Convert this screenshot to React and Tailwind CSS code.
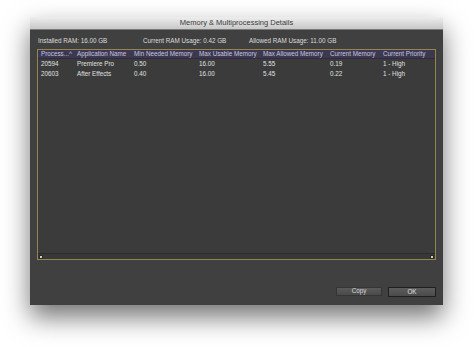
import { useState } from "react";

const rows = [
  { pid: "20594", name: "Premiere Pro", min: "0.50", usable: "16.00", allowed: "5.55", cur: "0.19", prio: "1 - High" },
  { pid: "20603", name: "After Effects", min: "0.40", usable: "16.00", allowed: "5.45", cur: "0.22", prio: "1 - High" },
];

function App() {
  const [sel] = useState(null);
  return (
    <div className="w-[474px] h-[347px] bg-white overflow-hidden" style={{ fontFamily: '"Liberation Sans", Arial, sans-serif' }}>
      <div className="pt-[17px] pl-[30px]">
        <div className="w-[413px] h-[288px] flex flex-col shadow-[0_12px_24px_rgba(0,0,0,0.55)]">
          <div className="h-[13px] bg-gradient-to-b from-[#eeeeee] to-[#c8c8c8] border-b border-[#7a7a7a] flex items-center justify-center text-[7.5px] text-[#3a3a3a]">
            Memory &amp; Multiprocessing Details
          </div>
          <div className="flex-1 bg-[#404040] flex flex-col px-[7px]">
            <div className="h-[19px] pt-[8px] flex text-[6.3px] text-[#dcdcdc] leading-none">
              <span className="w-[106px] pl-[1px]">Installed RAM: 16.00 GB</span>
              <span className="w-[106px]">Current RAM Usage: 0.42 GB</span>
              <span>Allowed RAM Usage: 11.00 GB</span>
            </div>
            <div className="h-[211px] border border-[#958450] bg-[#3b3b3b] flex flex-col">
              <div className="h-[9px] bg-[#3c3850] flex items-center text-[6.3px] text-[#c9c6e0] leading-none border-b border-[#2e2c3c]">
                <span className="w-[39px] pl-[3px]">Process...^</span>
                <span className="w-[57px]">Application Name</span>
                <span className="w-[65px]">Min Needed Memory</span>
                <span className="w-[64px]">Max Usable Memory</span>
                <span className="w-[67px]">Max Allowed Memory</span>
                <span className="w-[53px]">Current Memory</span>
                <span>Current Priority</span>
              </div>
              <div className="flex-1">
                {rows.map((r) => (
                  <div key={r.pid} className={"h-[10px] flex items-center text-[6.3px] text-[#e0e0e0] leading-none " + (sel === r.pid ? "bg-[#555]" : "")}>
                    <span className="w-[39px] pl-[3px]">{r.pid}</span>
                    <span className="w-[57px]">{r.name}</span>
                    <span className="w-[65px]">{r.min}</span>
                    <span className="w-[64px]">{r.usable}</span>
                    <span className="w-[67px]">{r.allowed}</span>
                    <span className="w-[53px]">{r.cur}</span>
                    <span>{r.prio}</span>
                  </div>
                ))}
              </div>
              <div className="h-[6px] border-t border-[#2c2c2c] bg-[#383838] flex items-center justify-between px-[1px]">
                <span className="w-[4px] h-[4px] bg-[#2a2a2a] flex items-center justify-center">
                  <span className="w-[2px] h-[2px] bg-[#cfcfcf]" />
                </span>
                <span className="w-[4px] h-[4px] bg-[#2a2a2a] flex items-center justify-center">
                  <span className="w-[2px] h-[2px] bg-[#cfcfcf]" />
                </span>
              </div>
            </div>
            <div className="flex-1 flex justify-end items-start pt-[27px] gap-[6px]">
              <button className="w-[46px] h-[9px] bg-gradient-to-b from-[#5a5a5a] to-[#4a4a4a] border border-[#353535] text-[6.3px] text-[#d8d8d8] leading-none flex items-center justify-center">
                Copy
              </button>
              <button className="w-[48px] h-[10px] bg-gradient-to-b from-[#5c5c5c] to-[#4b4b4b] border border-[#1f1f1f] text-[6.3px] text-[#e0e0e0] leading-none flex items-center justify-center">
                OK
              </button>
            </div>
          </div>
        </div>
      </div>
    </div>
  );
}

export default App;
